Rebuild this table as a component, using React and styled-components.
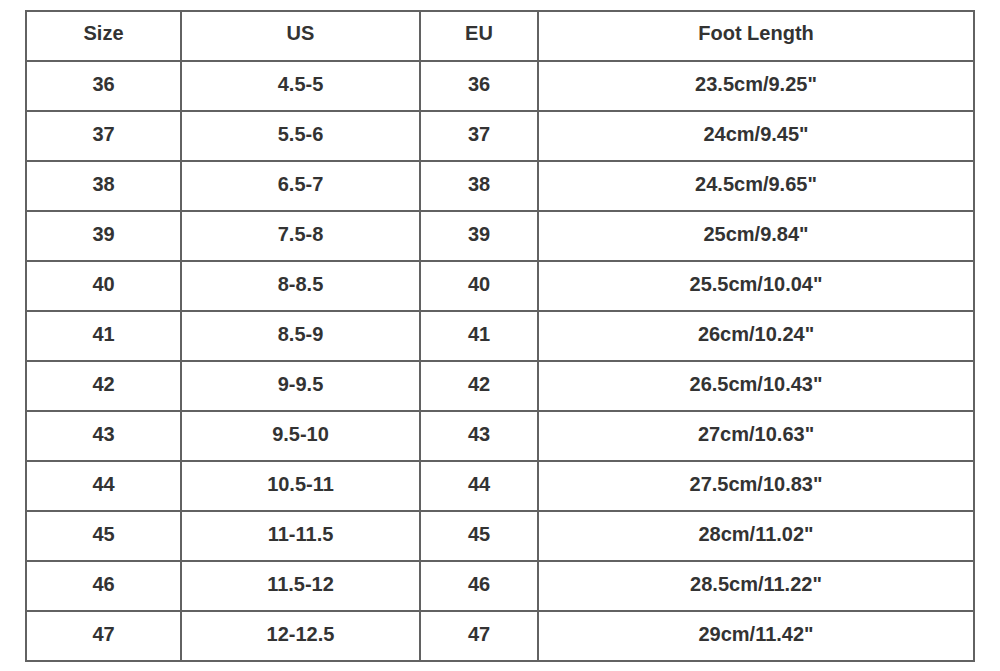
import React from "react";
import styled, { createGlobalStyle } from "styled-components";

const Global = createGlobalStyle`
  html, body { margin: 0; padding: 0; background: #fff; }
  body { font-family: "Liberation Sans", Arial, sans-serif; }
`;

const Page = styled.div`
  width: 1000px;
  height: 671px;
  padding: 10px 0 0 25px;
  box-sizing: border-box;
`;

const Grid = styled.div`
  display: grid;
  grid-template-columns: 153px 237px 116px 434px;
  grid-auto-rows: 48px;
  gap: 2px;
  padding: 2px;
  width: max-content;
  background: #626262;
`;

const Cell = styled.div`
  background: #fff;
  display: flex;
  align-items: center;
  justify-content: center;
  font-size: 20px;
  font-weight: 700;
  color: #333;
  padding-bottom: ${(p) => (p.$head ? "5px" : "3px")};
`;

const head = ["Size", "US", "EU", "Foot Length"];
const rows = [
  ["36", "4.5-5", "36", '23.5cm/9.25"'],
  ["37", "5.5-6", "37", '24cm/9.45"'],
  ["38", "6.5-7", "38", '24.5cm/9.65"'],
  ["39", "7.5-8", "39", '25cm/9.84"'],
  ["40", "8-8.5", "40", '25.5cm/10.04"'],
  ["41", "8.5-9", "41", '26cm/10.24"'],
  ["42", "9-9.5", "42", '26.5cm/10.43"'],
  ["43", "9.5-10", "43", '27cm/10.63"'],
  ["44", "10.5-11", "44", '27.5cm/10.83"'],
  ["45", "11-11.5", "45", '28cm/11.02"'],
  ["46", "11.5-12", "46", '28.5cm/11.22"'],
  ["47", "12-12.5", "47", '29cm/11.42"'],
];

export default function App() {
  return (
    <>
      <Global />
      <Page>
        <Grid>
          {head.map((h) => (
            <Cell key={h} $head>
              {h}
            </Cell>
          ))}
          {rows.map((r, i) =>
            r.map((c, j) => <Cell key={`${i}-${j}`}>{c}</Cell>)
          )}
        </Grid>
      </Page>
    </>
  );
}
